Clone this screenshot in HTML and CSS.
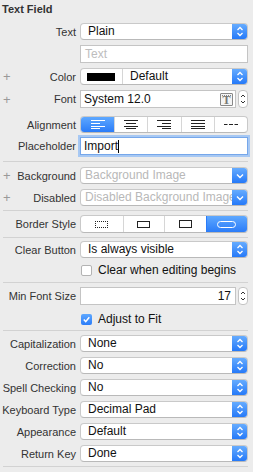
FILE: index.html
```html
<!DOCTYPE html>
<html>
<head>
<meta charset="utf-8">
<link rel="stylesheet" href="styles.css">
</head>
<body>
<div class="panel">
  <div class="title">Text Field</div>

  <div class="row m0">
    <div class="lbl"><span></span><span>Text</span></div>
    <div class="popup"><span class="val">Plain</span><span class="blue"><svg width="16" height="17" viewBox="0 0 16 17"><path d="M5.5 7 L8 4.5 L10.5 7 M5.5 10 L8 12.5 L10.5 10" fill="none" stroke="#fff" stroke-width="1.3"/></svg></span></div>
  </div>

  <div class="row m5">
    <div class="lbl"><span></span><span></span></div>
    <div class="field"><span class="ph">Text</span></div>
  </div>

  <div class="row m5">
    <div class="lbl"><span class="add">+</span><span>Color</span></div>
    <div class="popup"><span class="well"><span class="swatch"></span></span><span class="val">Default</span><span class="blue"><svg width="16" height="17" viewBox="0 0 16 17"><path d="M5.5 7 L8 4.5 L10.5 7 M5.5 10 L8 12.5 L10.5 10" fill="none" stroke="#fff" stroke-width="1.3"/></svg></span></div>
  </div>

  <div class="row m5">
    <div class="lbl"><span class="add">+</span><span>Font</span></div>
    <div class="withstep">
      <div class="field tall"><span class="val dark grow">System 12.0</span><span class="ticon"><span class="dots"></span>T</span></div>
      <span class="step"><svg width="10" height="18" viewBox="0 0 10 18"><path d="M3 7 L5 5 L7 7 M3 11 L5 13 L7 11" fill="none" stroke="#333" stroke-width="1"/></svg></span>
    </div>
  </div>

  <div class="row m8">
    <div class="lbl"><span></span><span>Alignment</span></div>
    <div class="seg">
      <span class="sg on"><svg width="14" height="9" viewBox="0 0 14 9"><path d="M0 .5H14M0 3.5H9M0 6.5H14M0 8.5H9" stroke="#fff" stroke-width="1"/></svg></span>
      <span class="sg"><svg width="14" height="9" viewBox="0 0 14 9"><path d="M0 .5H14M2 3.5H12M0 6.5H14M2 8.5H12" stroke="#222" stroke-width="1"/></svg></span>
      <span class="sg"><svg width="14" height="9" viewBox="0 0 14 9"><path d="M0 .5H14M5 3.5H14M0 6.5H14M5 8.5H14" stroke="#222" stroke-width="1"/></svg></span>
      <span class="sg"><svg width="14" height="9" viewBox="0 0 14 9"><path d="M0 .5H14M0 3.5H14M0 6.5H14M0 8.5H14" stroke="#222" stroke-width="1"/></svg></span>
      <span class="sg"><svg width="14" height="3" viewBox="0 0 14 3"><path d="M0 1.5H3.5M5 1.5H9M10.5 1.5H14" stroke="#222" stroke-width="1"/></svg></span>
    </div>
  </div>

  <div class="row m4">
    <div class="lbl"><span></span><span>Placeholder</span></div>
    <div class="field focus"><span class="val dark">Import</span><span class="caret"></span></div>
  </div>

  <div class="sep m6"></div>

  <div class="row m5">
    <div class="lbl"><span class="add">+</span><span>Background</span></div>
    <div class="popup"><span class="val gray">Background Image</span><span class="blue"><svg width="16" height="17" viewBox="0 0 16 17"><path d="M5 7.5 L8 10.5 L11 7.5" fill="none" stroke="#fff" stroke-width="1.4"/></svg></span></div>
  </div>

  <div class="row m5">
    <div class="lbl"><span class="add">+</span><span>Disabled</span></div>
    <div class="popup"><span class="val gray">Disabled Background Image</span><span class="blue"><svg width="16" height="17" viewBox="0 0 16 17"><path d="M5 7.5 L8 10.5 L11 7.5" fill="none" stroke="#fff" stroke-width="1.4"/></svg></span></div>
  </div>

  <div class="sep m4"></div>

  <div class="row m4">
    <div class="lbl"><span></span><span>Border Style</span></div>
    <div class="seg s4 tall">
      <span class="sg"><span class="bs dotted"></span></span>
      <span class="sg"><span class="bs line"></span></span>
      <span class="sg"><span class="bs bezel"></span></span>
      <span class="sg on"><span class="bs round"></span></span>
    </div>
  </div>

  <div class="sep m4"></div>

  <div class="row m3">
    <div class="lbl"><span></span><span>Clear Button</span></div>
    <div class="popup"><span class="val">Is always visible</span><span class="blue"><svg width="16" height="17" viewBox="0 0 16 17"><path d="M5.5 7 L8 4.5 L10.5 7 M5.5 10 L8 12.5 L10.5 10" fill="none" stroke="#fff" stroke-width="1.3"/></svg></span></div>
  </div>

  <div class="row m6">
    <div class="lbl"><span></span><span></span></div>
    <label class="check"><span class="box"></span><span>Clear when editing begins</span></label>
  </div>

  <div class="sep m6"></div>

  <div class="row m4">
    <div class="lbl"><span></span><span>Min Font Size</span></div>
    <div class="withstep">
      <div class="field tall right"><span class="val dark">17</span></div>
      <span class="step"><svg width="10" height="18" viewBox="0 0 10 18"><path d="M3 7 L5 5 L7 7 M3 11 L5 13 L7 11" fill="none" stroke="#333" stroke-width="1"/></svg></span>
    </div>
  </div>

  <div class="row m8">
    <div class="lbl"><span></span><span></span></div>
    <label class="check"><span class="box on"><svg width="11" height="11" viewBox="0 0 11 11"><path d="M2.8 5.6 L4.7 7.6 L8.3 3.2" fill="none" stroke="#fff" stroke-width="1.5"/></svg></span><span>Adjust to Fit</span></label>
  </div>

  <div class="sep m5"></div>

  <div class="row m4">
    <div class="lbl"><span></span><span>Capitalization</span></div>
    <div class="popup"><span class="val">None</span><span class="blue"><svg width="16" height="17" viewBox="0 0 16 17"><path d="M5.5 7 L8 4.5 L10.5 7 M5.5 10 L8 12.5 L10.5 10" fill="none" stroke="#fff" stroke-width="1.3"/></svg></span></div>
  </div>
  <div class="row m5">
    <div class="lbl"><span></span><span>Correction</span></div>
    <div class="popup"><span class="val">No</span><span class="blue"><svg width="16" height="17" viewBox="0 0 16 17"><path d="M5.5 7 L8 4.5 L10.5 7 M5.5 10 L8 12.5 L10.5 10" fill="none" stroke="#fff" stroke-width="1.3"/></svg></span></div>
  </div>
  <div class="row m5">
    <div class="lbl"><span></span><span>Spell Checking</span></div>
    <div class="popup"><span class="val">No</span><span class="blue"><svg width="16" height="17" viewBox="0 0 16 17"><path d="M5.5 7 L8 4.5 L10.5 7 M5.5 10 L8 12.5 L10.5 10" fill="none" stroke="#fff" stroke-width="1.3"/></svg></span></div>
  </div>
  <div class="row m5">
    <div class="lbl"><span></span><span>Keyboard Type</span></div>
    <div class="popup"><span class="val">Decimal Pad</span><span class="blue"><svg width="16" height="17" viewBox="0 0 16 17"><path d="M5.5 7 L8 4.5 L10.5 7 M5.5 10 L8 12.5 L10.5 10" fill="none" stroke="#fff" stroke-width="1.3"/></svg></span></div>
  </div>
  <div class="row m5">
    <div class="lbl"><span></span><span>Appearance</span></div>
    <div class="popup"><span class="val">Default</span><span class="blue"><svg width="16" height="17" viewBox="0 0 16 17"><path d="M5.5 7 L8 4.5 L10.5 7 M5.5 10 L8 12.5 L10.5 10" fill="none" stroke="#fff" stroke-width="1.3"/></svg></span></div>
  </div>
  <div class="row m5">
    <div class="lbl"><span></span><span>Return Key</span></div>
    <div class="popup"><span class="val">Done</span><span class="blue"><svg width="16" height="17" viewBox="0 0 16 17"><path d="M5.5 7 L8 4.5 L10.5 7 M5.5 10 L8 12.5 L10.5 10" fill="none" stroke="#fff" stroke-width="1.3"/></svg></span></div>
  </div>

  <div class="sep m4"></div>
</div>
</body>
</html>
```

FILE: styles.css
```css
html, body {
  margin: 0;
  padding: 0;
  background: #ececec;
}
.panel {
  width: 253px;
  height: 472px;
  background: #ececec;
  font-family: "Liberation Sans", Arial, sans-serif;
  color: #222;
  overflow: hidden;
}
.title {
  height: 21px;
  padding: 2px 0 0 2px;
  box-sizing: border-box;
  font-size: 11px;
  line-height: 14px;
  font-weight: bold;
  color: #333;
}
.row {
  display: grid;
  grid-template-columns: 76px 168px;
  column-gap: 4px;
  align-items: center;
}
.m0 { margin-top: 2px; }
.m3 { margin-top: 3px; }
.m4 { margin-top: 4px; }
.m5 { margin-top: 5px; }
.m6 { margin-top: 6px; }
.m8 { margin-top: 8px; }
.lbl {
  display: flex;
  justify-content: space-between;
  align-items: center;
  font-size: 11px;
  color: #333;
  white-space: nowrap;
}
.add {
  padding-left: 3px;
  font-size: 13px;
  line-height: 11px;
  color: #999;
  font-weight: 300;
}
.popup {
  height: 17px;
  box-sizing: border-box;
  background: #fff;
  border: 1px solid #c9c9c9;
  border-bottom-color: #b9b9b9;
  border-radius: 4px;
  display: flex;
  align-items: center;
  overflow: hidden;
}
.val {
  flex: 1;
  min-width: 0;
  padding-left: 7px;
  font-size: 12px;
  line-height: 15px;
  color: #111;
  white-space: nowrap;
  overflow: hidden;
}
.val.gray { color: #b8b8b8; padding-left: 4px; text-overflow: clip; }
.val.dark { color: #111; padding-left: 3px; flex: none; }
.val.dark.grow { flex: 1; }
.blue {
  width: 16px;
  height: 17px;
  margin: -1px -1px -1px 0;
  background: linear-gradient(#6aafff, #2176f8);
  border-radius: 0 4px 4px 0;
  display: flex;
  flex: none;
}
.well {
  width: 41px;
  height: 100%;
  border-right: 1px solid #d6d6d6;
  display: flex;
  align-items: center;
  justify-content: center;
  flex: none;
}
.swatch {
  width: 28px;
  height: 8px;
  background: #000;
  margin-left: -1px;
}
.field {
  height: 18px;
  box-sizing: border-box;
  background: #fff;
  border: 1px solid #c4c4c4;
  display: flex;
  align-items: center;
}
.ph {
  font-size: 12px;
  color: #bdbdbd;
  padding-left: 4px;
}
.withstep {
  display: flex;
  align-items: center;
  gap: 2px;
}
.withstep .field { flex: 1; }
.field.right { justify-content: flex-end; }
.field.right .val { padding: 0 4px 0 0; }
.ticon {
  position: relative;
  width: 13px;
  height: 13px;
  box-sizing: border-box;
  border: 1px solid #888;
  border-radius: 1px;
  margin-right: 2px;
  font-family: "Liberation Serif", serif;
  font-size: 12px;
  font-weight: bold;
  line-height: 12px;
  text-align: center;
  color: #777;
  background: #f4f4f4;
  flex: none;
}
.dots {
  position: absolute;
  left: 1px;
  right: 1px;
  top: 1px;
  border-top: 1px dotted #888;
}
.step {
  width: 10px;
  height: 18px;
  box-sizing: border-box;
  border: 1px solid #c4c4c4;
  border-radius: 4px;
  background: #fff;
  display: flex;
  align-items: center;
  justify-content: center;
  flex: none;
}
.step svg { margin: -1px; }
.seg {
  height: 17px;
  box-sizing: border-box;
  background: #fff;
  border: 1px solid #c9c9c9;
  border-bottom-color: #b9b9b9;
  border-radius: 4px;
  display: grid;
  grid-template-columns: repeat(5, 1fr);
  overflow: hidden;
}
.seg.s4 { grid-template-columns: repeat(4, 1fr); }
.seg.tall { height: 18px; }
.sg {
  display: flex;
  align-items: center;
  justify-content: center;
  border-left: 1px solid #d6d6d6;
}
.sg:first-child { border-left: none; }
.sg.on {
  background: linear-gradient(#5ea8ff, #2b7cf8);
  border-left-color: #2b7cf8;
}
.bs { display: block; box-sizing: border-box; }
.bs.dotted { width: 13px; height: 7px; border: 1px dotted #222; }
.bs.line { width: 13px; height: 7px; border: 1px solid #222; }
.bs.bezel { width: 13px; height: 8px; border: 1px solid #222; border-top-width: 1.5px; }
.bs.round { width: 19px; height: 7px; border: 1px solid #fff; border-radius: 4px; }
.focus {
  border-color: #76a7ea;
  box-shadow: 0 0 0 2px #a7c8f3;
}
.caret {
  width: 1px;
  height: 13px;
  background: #000;
}
.sep {
  height: 1px;
  margin-left: 3px;
  width: 245px;
  background: #d2d2d2;
}
.check {
  display: flex;
  align-items: center;
  gap: 6px;
  font-size: 12px;
  color: #111;
  white-space: nowrap;
  height: 12px;
  padding-left: 1px;
}
.box {
  width: 11px;
  height: 11px;
  box-sizing: border-box;
  border: 1px solid #b3b3b3;
  border-radius: 2px;
  background: #fff;
  display: flex;
  flex: none;
}
.box.on {
  border: none;
  background: linear-gradient(#5ea8ff, #2b7cf8);
}
```
